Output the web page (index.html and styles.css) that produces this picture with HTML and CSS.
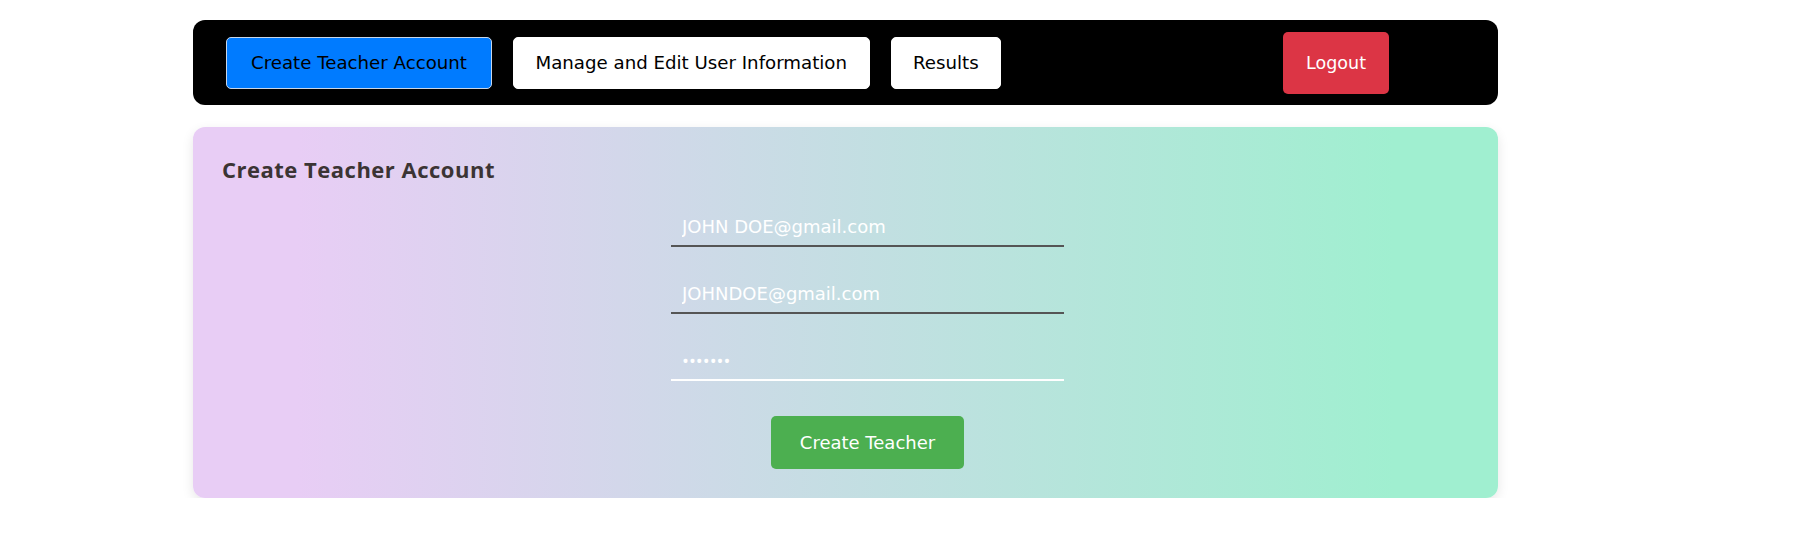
FILE: index.html
```html
<!DOCTYPE html>
<html lang="en">
<head>
<meta charset="utf-8">
<title>Admin - Create Teacher Account</title>
<link rel="stylesheet" href="styles.css">
</head>
<body>
<div class="page">
  <nav class="topbar">
    <button class="tab tab-active" type="button">Create Teacher Account</button>
    <button class="tab" type="button">Manage and Edit User Information</button>
    <button class="tab" type="button">Results</button>
    <button class="logout" type="button">Logout</button>
  </nav>
  <section class="card">
    <h2 class="card-title">Create Teacher Account</h2>
    <form class="form">
      <input class="field" type="text" value="JOHN DOE@gmail.com">
      <input class="field" type="email" value="JOHNDOE@gmail.com">
      <input class="field field-focus field-password" type="password" value="1234567">
      <button class="submit" type="button">Create Teacher</button>
    </form>
  </section>
</div>
</body>
</html>
```
FILE: styles.css
```css
* { box-sizing: border-box; }
html, body { margin: 0; padding: 0; background: #fff; }
body { font-family: "DejaVu Sans", "Open Sans", sans-serif; }

.page {
  width: 1305px;
  margin-left: 193px;
  padding-top: 20px;
}

.topbar {
  display: flex;
  align-items: center;
  gap: 21px;
  height: 85px;
  padding: 0 109px 0 33px;
  background: #000;
  border-radius: 12px;
}

.tab {
  font-family: inherit;
  font-size: 18.2px;
  line-height: 28px;
  padding: 11px 21.5px;
  color: #000;
  background: #fff;
  border: 1px solid #fff;
  border-radius: 5px;
  cursor: pointer;
}

.tab-active {
  background: #007bff;
  border-color: #c8d6e8;
  padding: 11px 24px;
}

.logout {
  margin-left: auto;
  font-family: inherit;
  font-size: 17.5px;
  line-height: 26px;
  padding: 18px 23px;
  color: #fff;
  background: #dc3545;
  border: none;
  border-radius: 5px;
  cursor: pointer;
}

.card {
  margin-top: 22px;
  padding: 27px 30px 29px 29px;
  border-radius: 12px;
  background: linear-gradient(90deg, #e8cdf5 8%, #a0efd0 92%);
  box-shadow: 0 4px 12px rgba(0, 0, 0, 0.1);
}

.card-title {
  margin: 0;
  font-family: "Open Sans", sans-serif;
  font-weight: 700;
  font-size: 22px;
  line-height: 30px;
  letter-spacing: 0.5px;
  color: #3b3434;
}

.form {
  display: flex;
  flex-direction: column;
  align-items: center;
  gap: 21px;
  padding-left: 45px;
  margin-top: 17px;
}

.field {
  width: 393px;
  padding: 14px 11px 6px;
  font-family: inherit;
  font-size: 18px;
  line-height: 24px;
  color: #fff;
  background: transparent;
  border: none;
  border-bottom: 2px solid #555;
  outline: none;
}

.field-focus { border-bottom-color: #fff; }

.field-password {
  font-family: "Open Sans", sans-serif;
  font-size: 18.4px;
}

.submit {
  margin-top: 14px;
  font-family: inherit;
  font-size: 18px;
  line-height: 27px;
  padding: 13px 29px;
  color: #fff;
  background: #4caf50;
  border: none;
  border-radius: 5px;
  cursor: pointer;
}
```
